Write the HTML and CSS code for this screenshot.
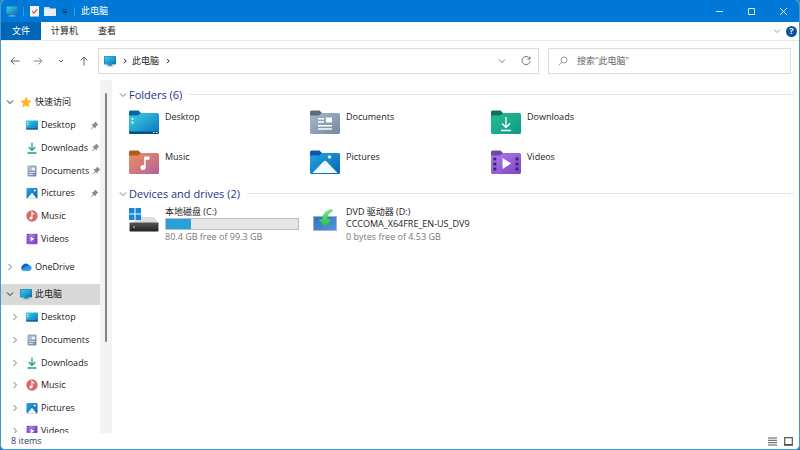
FILE: index.html
```html
<!DOCTYPE html>
<html lang="zh-CN">
<head>
  <meta charset="utf-8">
  <title>此电脑</title>
  <link rel="stylesheet" href="styles.css">
</head>
<body>
  <!-- shared icons -->
  <svg class="defs" aria-hidden="true">
    <defs>
      <linearGradient id="gDesk" x1="0" y1="0" x2="1" y2="1"><stop offset="0" stop-color="#3fd0e6"/><stop offset="1" stop-color="#0a74bd"/></linearGradient>
      <linearGradient id="gDoc" x1="0" y1="0" x2="1" y2="1"><stop offset="0" stop-color="#a9b7c9"/><stop offset="1" stop-color="#7488a3"/></linearGradient>
      <linearGradient id="gDown" x1="0" y1="0" x2="1" y2="1"><stop offset="0" stop-color="#27bd8e"/><stop offset="1" stop-color="#0c9a8a"/></linearGradient>
      <linearGradient id="gMusic" x1="0" y1="0" x2="1" y2="1"><stop offset="0" stop-color="#f0905a"/><stop offset="1" stop-color="#b0629c"/></linearGradient>
      <linearGradient id="gPic" x1="0" y1="0" x2="1" y2="1"><stop offset="0" stop-color="#28a4e6"/><stop offset="1" stop-color="#0764ae"/></linearGradient>
      <linearGradient id="gVid" x1="0" y1="0" x2="1" y2="1"><stop offset="0" stop-color="#b07cec"/><stop offset="1" stop-color="#7d46c4"/></linearGradient>
      <linearGradient id="gDisk" x1="0" y1="0" x2="0" y2="1"><stop offset="0" stop-color="#555"/><stop offset="1" stop-color="#222"/></linearGradient>
      <linearGradient id="gDvd" x1="0" y1="0" x2="1" y2="1"><stop offset="0" stop-color="#2f6fc4"/><stop offset="1" stop-color="#5b93d8"/></linearGradient>
      <linearGradient id="gArrow" x1="0" y1="0" x2="0" y2="1"><stop offset="0" stop-color="#7fe88a"/><stop offset="1" stop-color="#1fc348"/></linearGradient>
    </defs>
    <symbol id="down" viewBox="0 0 8 8"><path d="M1 2.5 4 5.5 7 2.5" fill="none" stroke="currentColor"/></symbol>
    <symbol id="right" viewBox="0 0 8 8"><path d="M2.5 1 5.5 4 2.5 7" fill="none" stroke="currentColor"/></symbol>
    <symbol id="crumb" viewBox="0 0 8 8"><path d="M3 1.8 5.2 4 3 6.2" fill="none" stroke="currentColor"/></symbol>
    <symbol id="pc" viewBox="0 0 12 12"><path d="M4 9h4v2H4z" fill="#5b8fa8"/><path d="M2.5 10.5h7v1h-7z" fill="#79b6cf"/><rect y="1" width="12" height="8.5" rx=".8" fill="#1478a8"/><rect x=".6" y="1.6" width="10.8" height="7.3" rx=".4" fill="url(#gDesk)"/></symbol>
    <symbol id="star" viewBox="0 0 12 12"><path d="M6 .6 7.7 4.2 11.6 4.7 8.7 7.4 9.5 11.3 6 9.4 2.5 11.3 3.3 7.4 .4 4.7 4.3 4.2z" fill="#fdb91b"/></symbol>
    <symbol id="pin" viewBox="0 0 9 9"><path d="M5.2 .6 8.4 3.8 7.4 4.3 5.9 5.8 5.6 7.6 3.8 5.9 1 8.5 .6 8.2 3.1 5.2 1.4 3.5 3.2 3.1 4.7 1.6z" fill="#8a8f94"/></symbol>
    <symbol id="cloud" viewBox="0 0 12 12"><path d="M3 9.5A3 3 0 0 1 2.7 4.2 3.6 3.6 0 0 1 9 4.3 2.7 2.7 0 0 1 9.3 9.5z" fill="#0a65c0"/><path d="M3 9.5 1 8.8 6 5.4Q9.5 4.3 11 5.2A2.7 2.7 0 0 1 9.3 9.5z" fill="#2a9be8"/></symbol>
    <symbol id="sDesktop" viewBox="0 0 12 12"><rect y="1.5" width="12" height="9" rx="1" fill="url(#gDesk)"/><path d="M0 9.3h12v.4a.8.8 0 0 1-.8.8H.8a.8.8 0 0 1-.8-.8z" fill="#0b5f96"/><path d="M1.3 3h1.3v1.2H1.3zM1.3 5h1.3v1.2H1.3z" fill="#d8f7ff"/></symbol>
    <symbol id="sDown" viewBox="0 0 12 12"><path d="M6 .5V8M2.7 5 6 8.3 9.3 5M1.5 11h9" fill="none" stroke="#1ba27c" stroke-width="1.3"/></symbol>
    <symbol id="sDoc" viewBox="0 0 12 12"><rect x="1.5" y=".5" width="9" height="11" rx="1" fill="url(#gDoc)"/><path d="M5.5 2.5h3.5v3H5.5z" fill="#eef3f9"/><path d="M3 3h1.5M3 5h1.5M3 7.5h6M3 9.5h4" stroke="#dfe7f0" stroke-width=".8"/></symbol>
    <symbol id="sPic" viewBox="0 0 12 12"><rect x=".5" y="1" width="11" height="10.5" rx="1" fill="url(#gPic)"/><path d="M1.3 11.5 6 5.8l4.7 5.7z" fill="#fff"/><circle cx="8.7" cy="3.6" r="1" fill="#fff"/></symbol>
    <symbol id="sMusic" viewBox="0 0 12 12"><circle cx="6" cy="6" r="5.7" fill="#d9696a"/><path d="M6 8V2.5q1 1.5 2.6 1.5" fill="none" stroke="#fff" stroke-width="1.1"/><circle cx="4.9" cy="8" r="1.5" fill="#fff"/></symbol>
    <symbol id="sVid" viewBox="0 0 12 12"><rect x=".5" y=".8" width="11" height="10.5" rx="1" fill="url(#gVid)"/><path d="M1.9 1v10M10.1 1v10" stroke="#4c2391" stroke-width="1.2" stroke-dasharray="1.3 1.2"/><path d="M4.7 3.7 8.4 6 4.7 8.3z" fill="#fff"/></symbol>
  </svg>

  <header class="titlebar">
    <svg class="icon"><use href="#pc"/></svg>
    <span class="sep"></span>
    <button aria-label="Properties"><svg width="9" height="12" viewBox="0 0 9 12"><path d="M0 1h9v10.5H0z" fill="#f6f4f2"/><path d="m2 6.2 2 2 3.2-4" fill="none" stroke="#d4572b" stroke-width="1.2"/></svg></button>
    <button aria-label="New folder"><svg width="12" height="12" viewBox="0 0 12 12"><path d="M0 2h5l1 1.5h6V11H0z" fill="#e7eef5"/><path d="M0 2h5l1 1.5H0z" fill="#bcd7ee"/></svg></button>
    <button aria-label="Customize"><svg width="8" height="8" viewBox="0 0 8 8"><path d="M2 2.5h4M2 4.5l2 2 2-2z" fill="#06386b" stroke="#06386b" stroke-width=".8"/></svg></button>
    <span class="sep"></span>
    <h1>此电脑</h1>
    <div class="caption">
      <button aria-label="Minimize"><svg viewBox="0 0 9 9"><path d="M1 4.5h7" stroke="#d6ebff"/></svg></button>
      <button aria-label="Maximize"><svg viewBox="0 0 9 9"><path d="M1.5 1.5h6v6h-6z" fill="none" stroke="#d6ebff"/></svg></button>
      <button aria-label="Close"><svg viewBox="0 0 9 9"><path d="m1 1 7 7M8 1 1 8" stroke="#e6f3ff"/></svg></button>
    </div>
  </header>

  <nav class="ribbon">
    <button class="file">文件</button>
    <button>计算机</button>
    <button>查看</button>
    <button class="expand" aria-label="Expand"><svg class="chev"><use href="#down"/></svg></button>
    <button class="help" aria-label="Help">?</button>
  </nav>

  <div class="toolbar">
    <div class="arrows">
      <button aria-label="Back"><svg viewBox="0 0 10 10"><path d="M9.5 5H1M4.5 1.5 1 5l3.5 3.5" fill="none" stroke="#666"/></svg></button>
      <button aria-label="Forward"><svg viewBox="0 0 10 10"><path d="M.5 5H9M5.5 1.5 9 5 5.5 8.5" fill="none" stroke="#8a8a8a"/></svg></button>
      <button aria-label="Recent"><svg viewBox="0 0 10 10"><path d="M3 4l2 2 2-2" fill="none" stroke="#666"/></svg></button>
      <button aria-label="Up"><svg viewBox="0 0 10 10"><path d="M5 9.5V1M1.5 4.5 5 1l3.5 3.5" fill="none" stroke="#666"/></svg></button>
    </div>
    <div class="address">
      <svg class="icon"><use href="#pc"/></svg>
      <svg class="chev"><use href="#crumb"/></svg>
      <a href="#">此电脑</a>
      <svg class="chev"><use href="#crumb"/></svg>
      <button class="history" aria-label="History"><svg class="chev"><use href="#down"/></svg></button>
      <button aria-label="Refresh"><svg width="10" height="10" viewBox="0 0 10 10"><path d="M8.8 3A4.1 4.1 0 1 0 9.1 5M9 .5V3.2H6.3" fill="none" stroke="#777"/></svg></button>
    </div>
    <label class="search">
      <svg width="10" height="10" viewBox="0 0 10 10"><circle cx="6" cy="4" r="3" fill="none" stroke="#999"/><path d="M3.8 6.2.8 9.2" stroke="#999"/></svg>
      <input type="text" placeholder='搜索"此电脑"' aria-label="搜索">
    </label>
  </div>

  <div class="content">
    <nav class="tree">
      <ul class="group">
        <li class="root"><svg class="chev"><use href="#down"/></svg><svg class="icon"><use href="#star"/></svg><a href="#">快速访问</a></li>
        <li><svg class="icon"><use href="#sDesktop"/></svg><a href="#">Desktop</a><svg class="pin"><use href="#pin"/></svg></li>
        <li><svg class="icon"><use href="#sDown"/></svg><a href="#">Downloads</a><svg class="pin"><use href="#pin"/></svg></li>
        <li><svg class="icon"><use href="#sDoc"/></svg><a href="#">Documents</a><svg class="pin"><use href="#pin"/></svg></li>
        <li><svg class="icon"><use href="#sPic"/></svg><a href="#">Pictures</a><svg class="pin"><use href="#pin"/></svg></li>
        <li><svg class="icon"><use href="#sMusic"/></svg><a href="#">Music</a></li>
        <li><svg class="icon"><use href="#sVid"/></svg><a href="#">Videos</a></li>
      </ul>
      <ul class="group single">
        <li class="root"><svg class="chev light"><use href="#right"/></svg><svg class="icon"><use href="#cloud"/></svg><a href="#">OneDrive</a></li>
      </ul>
      <ul class="group">
        <li class="root selected"><svg class="chev"><use href="#down"/></svg><svg class="icon"><use href="#pc"/></svg><a href="#">此电脑</a></li>
        <li class="sub"><svg class="chev light"><use href="#right"/></svg><svg class="icon"><use href="#sDesktop"/></svg><a href="#">Desktop</a></li>
        <li class="sub"><svg class="chev light"><use href="#right"/></svg><svg class="icon"><use href="#sDoc"/></svg><a href="#">Documents</a></li>
        <li class="sub"><svg class="chev light"><use href="#right"/></svg><svg class="icon"><use href="#sDown"/></svg><a href="#">Downloads</a></li>
        <li class="sub"><svg class="chev light"><use href="#right"/></svg><svg class="icon"><use href="#sMusic"/></svg><a href="#">Music</a></li>
        <li class="sub"><svg class="chev light"><use href="#right"/></svg><svg class="icon"><use href="#sPic"/></svg><a href="#">Pictures</a></li>
        <li class="sub"><svg class="chev light"><use href="#right"/></svg><svg class="icon"><use href="#sVid"/></svg><a href="#">Videos</a></li>
      </ul>
    </nav>
    <div class="scroll"><div class="thumb"></div></div>

    <main>
      <section>
        <h2><svg class="chev"><use href="#down"/></svg>Folders (6)</h2>
        <div class="items">
          <a class="item" href="#">
            <svg class="big" viewBox="0 0 30 24"><path d="M0 2a1.5 1.5 0 0 1 1.5-1.5h8L12 3v4H0z" fill="#0a62a8"/><path d="M0 5.5h9L12 3h16.5A1.5 1.5 0 0 1 30 4.5v18a1.5 1.5 0 0 1-1.5 1.5h-27A1.5 1.5 0 0 1 0 22.5z" fill="url(#gDesk)"/><path d="M0 21.5h30v1a1.5 1.5 0 0 1-1.5 1.5h-27A1.5 1.5 0 0 1 0 22.5z" fill="#0b4f80"/><path d="M2.5 8h2v2h-2zM2.5 11.5h2v2h-2z" fill="#d4f8ff"/><path d="M24 22.5h1.5M27 22.5h1.5" stroke="#d4f8ff"/></svg>
            <span>Desktop</span>
          </a>
          <a class="item" href="#">
            <svg class="big" viewBox="0 0 30 24"><path d="M0 2a1.5 1.5 0 0 1 1.5-1.5h8L12 3v4H0z" fill="#5c6b80"/><path d="M0 5.5h9L12 3h16.5A1.5 1.5 0 0 1 30 4.5v18a1.5 1.5 0 0 1-1.5 1.5h-27A1.5 1.5 0 0 1 0 22.5z" fill="url(#gDoc)"/><path d="M8 8.7h6M8 12h6M8 15.7h14M8 19h14" stroke="#fff" stroke-width="1.4"/><path d="M16 7.5h6v5h-6z" fill="#fff"/></svg>
            <span>Documents</span>
          </a>
          <a class="item" href="#">
            <svg class="big" viewBox="0 0 30 24"><path d="M0 2a1.5 1.5 0 0 1 1.5-1.5h8L12 3v4H0z" fill="#0b7552"/><path d="M0 5.5h9L12 3h16.5A1.5 1.5 0 0 1 30 4.5v18a1.5 1.5 0 0 1-1.5 1.5h-27A1.5 1.5 0 0 1 0 22.5z" fill="url(#gDown)"/><path d="M15 7v10M11 13.5l4 4 4-4M10 20.5h10" fill="none" stroke="#fff" stroke-width="1.3"/></svg>
            <span>Downloads</span>
          </a>
          <a class="item" href="#">
            <svg class="big" viewBox="0 0 30 24"><path d="M0 2a1.5 1.5 0 0 1 1.5-1.5h8L12 3v4H0z" fill="#b35a1c"/><path d="M0 5.5h9L12 3h16.5A1.5 1.5 0 0 1 30 4.5v18a1.5 1.5 0 0 1-1.5 1.5h-27A1.5 1.5 0 0 1 0 22.5z" fill="url(#gMusic)"/><circle cx="14" cy="17.5" r="2.5" fill="#fff"/><path d="M15.2 17.5V6.5h5.3v3.3h-3.8v7.7z" fill="#fff"/></svg>
            <span>Music</span>
          </a>
          <a class="item" href="#">
            <svg class="big" viewBox="0 0 30 24"><path d="M0 2a1.5 1.5 0 0 1 1.5-1.5h8L12 3v4H0z" fill="#0a5aa6"/><path d="M0 5.5h9L12 3h16.5A1.5 1.5 0 0 1 30 4.5v18a1.5 1.5 0 0 1-1.5 1.5h-27A1.5 1.5 0 0 1 0 22.5z" fill="url(#gPic)"/><path d="M2.5 23 13.5 11.5q1.5-1.3 3 0L27.5 23z" fill="#f2faff"/><circle cx="19.5" cy="7" r="1.8" fill="#d8f1ff"/></svg>
            <span>Pictures</span>
          </a>
          <a class="item" href="#">
            <svg class="big" viewBox="0 0 30 24"><path d="M0 2a1.5 1.5 0 0 1 1.5-1.5h8L12 3v4H0z" fill="#6c4a9c"/><path d="M0 5.5h9L12 3h16.5A1.5 1.5 0 0 1 30 4.5v18a1.5 1.5 0 0 1-1.5 1.5h-27A1.5 1.5 0 0 1 0 22.5z" fill="url(#gVid)"/><path d="M3.8 7.5v13M26 7.5v13" stroke="#44217f" stroke-width="3" stroke-dasharray="3 2"/><path d="M11.5 8v11L20 13.5z" fill="#fff"/></svg>
            <span>Videos</span>
          </a>
        </div>
      </section>

      <section>
        <h2><svg class="chev"><use href="#down"/></svg>Devices and drives (2)</h2>
        <div class="items drives">
          <a class="item" href="#">
            <svg class="big" viewBox="0 0 30 24"><path d="M4 15 9 9h16l4.5 6z" fill="#dcdedf"/><rect x=".5" y="14.5" width="29" height="9" rx=".8" fill="url(#gDisk)"/><circle cx="5" cy="19" r="1" fill="#4be06a"/><path d="M0 0h5.5v5.5H0zM6.5 0H12v5.5H6.5zM0 6.5h5.5V12H0zM6.5 6.5H12V12H6.5z" fill="#1489d8"/></svg>
            <span class="info">
              <span>本地磁盘 (C:)</span>
              <span class="usage"><span class="used" style="width: 19%"></span></span>
              <small>80.4 GB free of 99.3 GB</small>
            </span>
          </a>
          <a class="item" href="#">
            <svg class="big" viewBox="0 0 30 24"><rect x="3.5" y="8.5" width="23" height="14" fill="url(#gDvd)" stroke="#9fb6d0"/><path d="M21.5 1.5Q13 3 12.5 11L9 12l6.5 6.5L21 11.5l-3.8-.5Q17 5.5 22.5 3z" fill="url(#gArrow)" stroke="#26b84c" stroke-width=".4"/></svg>
            <span class="info">
              <span>DVD 驱动器 (D:)</span>
              <span>CCCOMA_X64FRE_EN-US_DV9</span>
              <small>0 bytes free of 4.53 GB</small>
            </span>
          </a>
        </div>
      </section>
    </main>
  </div>

  <footer class="status">
    <span>8 items</span>
    <button aria-label="Details"><svg width="9" height="9" viewBox="0 0 9 9"><path d="M0 1h9M0 3.3h9M0 5.7h9M0 8h9" stroke="#555"/></svg></button>
    <button aria-label="Large icons"><svg width="9" height="9" viewBox="0 0 9 9"><path d="M.7.7h7.6v6.8H.7z" fill="none" stroke="#555" stroke-width="1.2"/><path d="M0 8h9" stroke="#444" stroke-width="1.5"/></svg></button>
  </footer>
</body>
</html>
```

FILE: styles.css
```css
* {
  box-sizing: border-box;
}

html {
  background: #2f7fb8;
}

body {
  display: flex;
  flex-direction: column;
  height: 100vh;
  margin: 0;
  overflow: hidden;
  border: 1px solid #3f9cc9;
  border-top: 0;
  border-radius: 5px;
  background: #fff;
  color: #222;
  font: 9px/12px "Open Sans", "Noto Sans CJK SC", sans-serif;
}

button {
  display: flex;
  align-items: center;
  justify-content: center;
  padding: 0;
  border: 0;
  background: none;
  color: inherit;
  font: inherit;
}

a {
  color: inherit;
  text-decoration: none;
}

svg {
  flex: none;
}

.defs {
  position: absolute;
  width: 0;
  height: 0;
}

.icon {
  width: 12px;
  height: 12px;
}

.chev {
  width: 8px;
  height: 8px;
}

/* title bar */
.titlebar {
  display: flex;
  flex: none;
  align-items: center;
  height: 22px;
  padding-left: 5px;
  background: #0078d7;
  color: #fff;
}

.sep {
  width: 1px;
  height: 9px;
  margin: 0 6px 0 5px;
  background: #3f97df;
}

.titlebar button + button {
  margin-left: 5px;
}

.titlebar h1 {
  margin: 0;
  font-size: 9px;
  font-weight: normal;
}

.titlebar .caption {
  display: flex;
  margin-left: auto;
}

.titlebar .caption button {
  width: 32px;
  height: 22px;
  margin: 0;
}

.caption svg {
  width: 9px;
  height: 9px;
}

/* ribbon tabs */
.ribbon {
  display: flex;
  flex: none;
  align-items: center;
  height: 19px;
  padding-right: 2px;
  border-bottom: 1px solid #e6e8ea;
}

.ribbon button {
  height: 18px;
  padding: 0 10px;
}

.ribbon .file {
  width: 40px;
  padding: 0;
  background: #0067b8;
  color: #fff;
}

.ribbon .expand {
  margin-left: auto;
  padding: 0 5px;
  color: #999;
}

.ribbon .help {
  width: 11px;
  height: 11px;
  padding: 0;
  border-radius: 50%;
  background: #0f4f9e;
  color: #fff;
  font-weight: bold;
}

/* address bar */
.toolbar {
  display: flex;
  flex: none;
  height: 39px;
  padding: 7px 8px 6px 9px;
  gap: 9px;
}

.arrows {
  display: flex;
  width: 79px;
  justify-content: space-between;
}

.arrows svg {
  width: 10px;
  height: 10px;
}

.address,
.search {
  display: flex;
  align-items: center;
  border: 1px solid #dcdcdc;
}

.address {
  flex: 1;
  gap: 5px;
  padding: 0 7px 0 5px;
}

.address a {
  margin-left: -2px;
}

.address .history {
  margin: 0 10px 0 auto;
  color: #777;
}

.search {
  flex: none;
  width: 243px;
  gap: 9px;
  padding: 0 9px;
}

.search input {
  flex: 1;
  min-width: 0;
  padding: 0;
  border: 0;
  outline: 0;
  font: inherit;
}

.search input::placeholder {
  color: #666;
}

/* tree */
.content {
  display: flex;
  flex: 1;
  min-height: 0;
}

.tree {
  width: 99px;
  padding-top: 11px;
  overflow: hidden;
}

.group {
  display: flex;
  flex-direction: column;
  height: 159px;
  margin: 0 0 5px;
  padding: 0;
  list-style: none;
}

.group.single {
  height: 23px;
}

.group li {
  display: flex;
  flex: 1;
  align-items: center;
  gap: 3px;
  padding: 0 1px 0 25px;
  border: 1px solid transparent;
  border-width: 1px 0;
}

.group .root {
  padding-left: 5px;
}

.group .root .chev {
  margin-right: 3px;
}

.group .sub {
  padding-left: 10px;
}

.group .sub .chev {
  margin-right: 4px;
}

.group .selected {
  background: #d9d9d9 padding-box;
}

.light {
  color: #777;
}

.pin {
  width: 9px;
  height: 9px;
  margin-left: auto;
}

.scroll {
  width: 12px;
  padding: 13px 0 0 5px;
  background: #f3f3f3;
}

.thumb {
  width: 2px;
  height: 249px;
  border-radius: 1px;
  background: #858585;
}

/* file list */
main {
  flex: 1;
  padding: 7px 5px 0 7px;
}

h2 {
  display: flex;
  align-items: center;
  gap: 2px;
  margin: 0;
  color: #1e3287;
  font-size: 11px;
  font-weight: normal;
  line-height: 15px;
}

h2 .chev {
  color: #777;
}

h2::after {
  flex: 1;
  height: 1px;
  margin-left: 5px;
  background: #e4e6ea;
  content: "";
}

.items {
  display: grid;
  grid-template-columns: repeat(auto-fill, 181px);
  row-gap: 8px;
  padding: 8px 0 4px 10px;
}

.item {
  display: flex;
  gap: 6px;
  min-height: 32px;
}

.item > span {
  padding-top: 1px;
}

.big {
  width: 30px;
  height: 24px;
}

.drives {
  padding-top: 5px;
}

.drives .big {
  margin-top: 2px;
}

.drives .info {
  display: flex;
  flex-direction: column;
  width: 134px;
  padding: 0;
}

.info small {
  margin-top: 1px;
  color: #777;
  font-size: 9px;
}

.usage {
  height: 12px;
  border: 1px solid #bcbcbc;
  background: #e6e6e6;
}

.used {
  display: block;
  height: 100%;
  background: #26a0da;
}

/* status bar */
.status {
  display: flex;
  flex: none;
  align-items: center;
  height: 16px;
  gap: 7px;
  padding: 0 6px 0 10px;
  color: #2c3e63;
}

.status span {
  margin-right: auto;
}
```
